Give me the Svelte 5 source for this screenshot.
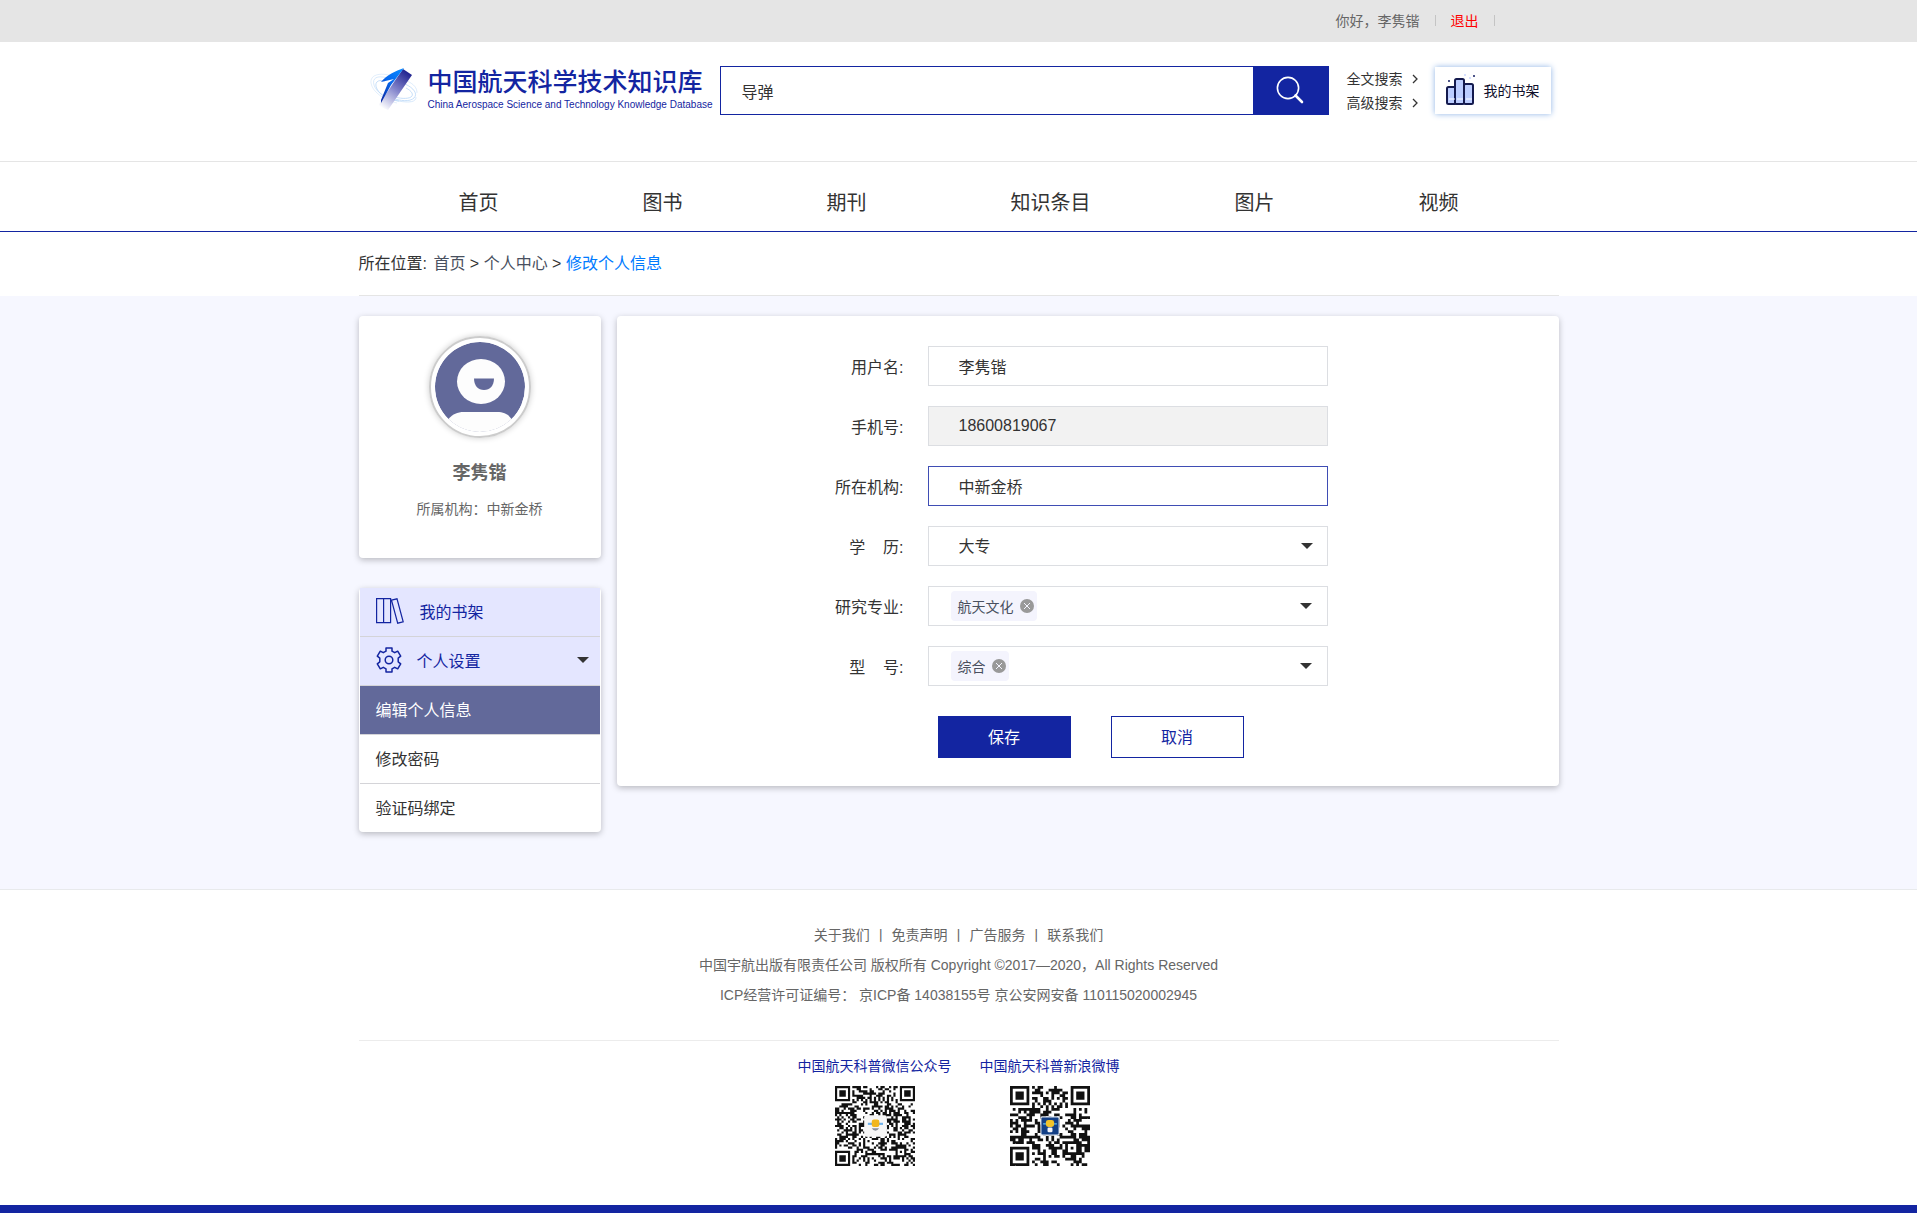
<script lang="ts">
  type Cell = { x: number; y: number };

  const navItems = ['首页', '图书', '期刊', '知识条目', '图片', '视频'];
  const aboutLinks = ['关于我们', '免责声明', '广告服务', '联系我们'];

  let keyword = '导弹';
  let username = '李隽锴';
  let phone = '18600819067';
  let org = '中新金桥';
  let degree = '大专';
  let majors = ['航天文化'];
  let models = ['综合'];
  let settingsOpen = true;

  const subItems = ['编辑个人信息', '修改密码', '验证码绑定'];
  let activeItem = '编辑个人信息';

  // 7x7 finder squares in three corners, 5x5 alignment mark, timing lines, noise elsewhere
  function qrCells(n: number, seed: number): Cell[] {
    const cells: Cell[] = [];
    const finder = (x: number, y: number) => {
      const d = Math.max(Math.abs(x - 3), Math.abs(y - 3));
      return d > 4 ? null : d === 3 || d <= 1;
    };
    let s = seed;
    for (let y = 0; y < n; y++) {
      for (let x = 0; x < n; x++) {
        s = (s * 1103515245 + 12345) % 2147483648;
        let on = ((s >> 12) & 255) < 132;
        const marks = [finder(x, y), finder(n - 1 - x, y), finder(x, n - 1 - y)];
        const mark = marks.find((m) => m !== null);
        const a = Math.max(Math.abs(x - (n - 7)), Math.abs(y - (n - 7)));
        if (mark !== undefined) on = mark as boolean;
        else if (a <= 2) on = a !== 1;
        else if (x === 6 || y === 6) on = (x + y) % 2 === 0;
        if (on) cells.push({ x, y });
      }
    }
    return cells;
  }

  function qrPath(n: number, seed: number): string {
    return qrCells(n, seed).map((c) => `M${c.x} ${c.y}h1v1h-1z`).join('');
  }

  const wechatQr = qrPath(37, 4271);
  const weiboQr = qrPath(29, 9157);

  function removeMajor(tag: string) {
    majors = majors.filter((t) => t !== tag);
  }

  function removeModel(tag: string) {
    models = models.filter((t) => t !== tag);
  }
</script>

<div class="topbar">
  <div class="container topbar-inner">
    <span>你好，李隽锴</span>
    <i class="sep"></i>
    <a class="logout" href="#logout">退出</a>
    <i class="sep"></i>
  </div>
</div>

<header class="header">
  <div class="container header-inner">
    <a class="logo" href="#home">
      <svg class="logo-mark" viewBox="0 0 50 46" aria-hidden="true">
        <defs>
          <linearGradient id="beam" x1="0.8" y1="0" x2="0.2" y2="1">
            <stop offset="0" stop-color="#1b1e8c" />
            <stop offset="0.5" stop-color="#8486cc" />
            <stop offset="1" stop-color="#ffffff" />
          </linearGradient>
          <linearGradient id="wing" x1="0.9" y1="0" x2="0.2" y2="1">
            <stop offset="0" stop-color="#0a8bff" />
            <stop offset="0.5" stop-color="#0668ee" />
            <stop offset="1" stop-color="#0c2ea8" />
          </linearGradient>
        </defs>
        <g fill="none" stroke="#b9d7f8" stroke-width="0.8">
          <path d="M24 10C10 6 1 9 2 17s12 17 26 20" opacity="0.5" />
          <path d="M18 12C8 9 3 12 5 19s12 14 24 16 18 1 18-4" opacity="0.7" />
          <path d="M16 15c-8-2-11 2-8 8s12 11 22 12" />
          <path d="M36 18c9 4 13 10 9 14s-14 3-22 0" />
          <path d="M37 22c6 3 8 7 5 9s-12 2-18-1" />
          <path d="M38 15c7 3 10 7 10 12" opacity="0.6" />
        </g>
        <path d="M34 3 43 9 19 44 9 40 25 16z" fill="url(#beam)" />
        <path d="M35 2 22 19 12 37 12 34 19 17 25 13 12 16C18 9 26 5 35 2z" fill="url(#wing)" />
      </svg>
      <span class="logo-text">
        <strong>中国航天科学技术知识库</strong>
        <small>China Aerospace Science and Technology Knowledge Database</small>
      </span>
    </a>

    <form class="search" on:submit|preventDefault>
      <input type="text" aria-label="搜索" bind:value={keyword} />
      <button type="submit" aria-label="搜索">
        <svg viewBox="0 0 28 28" width="28" height="28" fill="none" stroke="#fff">
          <circle cx="12" cy="12" r="10.6" stroke-width="1.6" />
          <path d="M19.5 19.5 26 26" stroke-width="2.6" stroke-linecap="round" />
        </svg>
      </button>
    </form>

    <div class="search-links">
      {#each ['全文搜索', '高级搜索'] as label}
        <a href="#search">
          {label}
          <svg viewBox="0 0 6 10" width="6" height="10" fill="none" stroke="#333" stroke-width="1.3">
            <path d="M1 1 5 5 1 9" />
          </svg>
        </a>
      {/each}
    </div>

    <a class="shelf" href="#shelf">
      <svg viewBox="0 0 30 32" width="30" height="32" aria-hidden="true">
        <g fill="#bccdff" stroke="#141a4e" stroke-width="2">
          <rect x="1" y="13" width="9" height="17" rx="1.5" />
          <rect x="18" y="10" width="9" height="20" rx="1.5" />
          <rect x="9" y="5" width="9" height="25" rx="1.5" />
        </g>
        <path d="M3 25h6M11 25h6M20 25h6" stroke="#fff" stroke-width="1" />
        <path d="m2 6 2 2m0-2-2 2M27 1l2 2m0-2-2 2" stroke="#39427c" stroke-width="0.9" />
        <path d="M18 1h2M23 4h2" stroke="#c9d6ff" stroke-width="1.5" />
      </svg>
      我的书架
    </a>
  </div>
</header>

<nav class="nav">
  <div class="container nav-inner">
    {#each navItems as item}
      <a href="#nav">{item}</a>
    {/each}
  </div>
</nav>

<div class="container crumbs">
  <span>所在位置:</span> <a href="#home">首页</a> &gt; <a href="#center">个人中心</a> &gt; <a class="current" href="#edit">修改个人信息</a>
</div>

<main class="main">
  <div class="container columns">
    <aside class="sidebar">
      <section class="profile">
        <div class="avatar">
          <svg viewBox="0 0 90 90" aria-hidden="true">
            <circle cx="45" cy="45" r="45" fill="#62699a" />
            <ellipse cx="46" cy="39.5" rx="24" ry="22.5" fill="#fdfdfd" />
            <path d="M39 36.5h20c0 7-4 11.5-10 11.5s-10-4.5-10-11.5z" fill="#62699a" />
            <path d="M13.500 77C18 72 22 70 29 70h33c7 0 11 2 14.500 7L78 92H12z" fill="#fdfdfd" />
          </svg>
        </div>
        <h2>李隽锴</h2>
        <p>所属机构：中新金桥</p>
      </section>

      <nav class="menu">
        <a class="group" href="#shelf">
          <svg class="books" viewBox="0 0 28 26" fill="none" stroke="#1325a1" stroke-width="1.2">
            <path d="M.6.6h14v24H.6zM7.6.6v24M15.5 2.2 21 .8l6.200 23-5.500 1.400z" />
          </svg>
          我的书架
        </a>
        <button type="button" class="group" on:click={() => (settingsOpen = !settingsOpen)}>
          <svg class="gear" viewBox="0 0 26 26" fill="none" stroke="#1325a1" stroke-width="1.5" stroke-linejoin="round">
            <path d="M10 1h6v3.200l2.700 1.500 3-1.500 3 5-2.500 2v3.600l2.500 2-3 5-3-1.500-2.700 1.500V25h-6v-3.200l-2.700-1.500-3 1.500-3-5 2.500-2v-3.600l-2.500-2 3-5 3 1.500L10 4.200z" />
            <circle cx="13" cy="13" r="3.800" />
          </svg>
          个人设置
          <span class="caret"></span>
        </button>
        {#if settingsOpen}
          {#each subItems as item}
            <a class="item" class:active={item === activeItem} href="#settings" on:click={() => (activeItem = item)}>{item}</a>
          {/each}
        {/if}
      </nav>
    </aside>

    <form class="panel" on:submit|preventDefault>
      <div class="row">
        <label for="username">用户名:</label>
        <input id="username" class="field" type="text" bind:value={username} />
      </div>
      <div class="row">
        <label for="phone">手机号:</label>
        <input id="phone" class="field" type="text" value={phone} disabled />
      </div>
      <div class="row">
        <label for="org">所在机构:</label>
        <input id="org" class="field focused" type="text" bind:value={org} />
      </div>
      <div class="row">
        <label for="degree">学&nbsp;&nbsp;&nbsp;&nbsp;历:</label>
        <div class="select-wrap">
          <select id="degree" class="field" bind:value={degree}>
            <option>大专</option>
            <option>本科</option>
            <option>硕士</option>
            <option>博士</option>
          </select>
          <span class="caret"></span>
        </div>
      </div>
      <div class="row">
        <span class="label" id="major-label">研究专业:</span>
        <div class="field tags" role="group" aria-labelledby="major-label">
          {#each majors as tag}
            <span class="tag">
              {tag}
              <button type="button" aria-label="移除" on:click={() => removeMajor(tag)}>
                <svg viewBox="0 0 14 14"><circle cx="7" cy="7" r="7" fill="#999" /><path d="m4 4 6 6m0-6-6 6" stroke="#f4f4fd" /></svg>
              </button>
            </span>
          {/each}
          <button type="button" class="open" aria-label="展开"><span class="caret"></span></button>
        </div>
      </div>
      <div class="row">
        <span class="label" id="model-label">型&nbsp;&nbsp;&nbsp;&nbsp;号:</span>
        <div class="field tags" role="group" aria-labelledby="model-label">
          {#each models as tag}
            <span class="tag">
              {tag}
              <button type="button" aria-label="移除" on:click={() => removeModel(tag)}>
                <svg viewBox="0 0 14 14"><circle cx="7" cy="7" r="7" fill="#999" /><path d="m4 4 6 6m0-6-6 6" stroke="#f4f4fd" /></svg>
              </button>
            </span>
          {/each}
          <button type="button" class="open" aria-label="展开"><span class="caret"></span></button>
        </div>
      </div>
      <div class="actions">
        <button type="submit" class="btn primary">保存</button>
        <button type="button" class="btn">取消</button>
      </div>
    </form>
  </div>
</main>

<footer class="footer">
  <div class="container about">
    <p>
      {#each aboutLinks as link, i}
        {#if i > 0}{' 丨 '}{/if}<a href="#about">{link}</a>
      {/each}
    </p>
    <p>中国宇航出版有限责任公司 版权所有 Copyright ©2017—2020，All Rights Reserved</p>
    <p>ICP经营许可证编号： 京ICP备 14038155号 京公安网安备 110115020002945</p>
  </div>
  <div class="container codes">
    <figure>
      <figcaption>中国航天科普微信公众号</figcaption>
      <svg viewBox="0 0 37 37" role="img" aria-label="微信二维码">
        <path d={wechatQr} fill="#111" />
        <rect x="13.5" y="13.5" width="10.5" height="10" rx="1" fill="#f6f6f6" />
        <path d="M15.2 17h7v1h-7z" fill="#6fb1ea" />
        <rect x="17" y="15.5" width="3.5" height="3.5" rx="1" fill="#f2b61c" />
        <path d="M17 19.500q1.700 2.500 3.400 0z" fill="#8a8f9a" />
      </svg>
    </figure>
    <figure>
      <figcaption>中国航天科普新浪微博</figcaption>
      <svg viewBox="0 0 29 29" role="img" aria-label="微博二维码">
        <path d={weiboQr} fill="#111" />
        <rect x="11" y="11" width="7" height="7" rx="0.6" fill="#dfe6ef" />
        <rect x="11.4" y="11.4" width="6.2" height="6.2" rx="0.4" fill="#123f86" />
        <rect x="13" y="12.3" width="3" height="2.6" rx="0.9" fill="#f2c32a" />
        <path d="M12 13.500h1v.5h-1zM16 13.500h1v.5h-1z" fill="#5fc0f0" />
        <rect x="13.6" y="15" width="1.8" height="1.8" rx="0.5" fill="#f2f4fa" />
      </svg>
    </figure>
  </div>
</footer>

<style>
  :global(body) {
    background: #fff;
    color: #333;
    font-family: 'Liberation Sans', 'Noto Sans CJK SC', sans-serif;
    font-size: 16px;
  }

  a {
    color: inherit;
    text-decoration: none;
  }

  input,
  select,
  button {
    box-sizing: border-box;
    margin: 0;
    padding: 0;
    border: 0;
    background: none;
    color: inherit;
    font: inherit;
    outline: none;
  }

  button {
    cursor: pointer;
  }

  h2,
  p,
  figure {
    margin: 0;
  }

  .container {
    box-sizing: border-box;
    max-width: 1200px;
    margin: 0 auto;
  }

  .topbar {
    background: #e5e5e5;
    color: #666;
    font-size: 14px;
  }

  .topbar-inner {
    display: flex;
    align-items: center;
    justify-content: flex-end;
    gap: 15px;
    box-sizing: border-box;
    height: 42px;
    padding: 0 64px 2px 0;
  }

  .sep {
    width: 1px;
    height: 11px;
    background: #c4c4c4;
  }

  .logout {
    color: #f00;
  }

  .header {
    border-bottom: 1px solid #e5e5e5;
  }

  .header-inner {
    display: flex;
    align-items: flex-start;
    height: 119px;
    padding: 24px 8px 0 10px;
  }

  .logo {
    display: flex;
    flex: none;
    width: 351px;
    color: #1325a1;
  }

  .logo-mark {
    width: 50px;
    height: 46px;
  }

  .logo-text {
    display: flex;
    flex-direction: column;
    margin-left: 9px;
    white-space: nowrap;
  }

  .logo-text strong {
    font-size: 25px;
    font-weight: 500;
    line-height: 32px;
  }

  .logo-text small {
    font-size: 10px;
    line-height: 14px;
  }

  .search {
    display: flex;
    flex: 1;
    box-sizing: border-box;
    height: 49px;
    border: 1px solid #1325a1;
  }

  .search input {
    flex: 1;
    min-width: 0;
    padding: 0 21px;
  }

  .search button {
    display: flex;
    align-items: center;
    justify-content: center;
    width: 75px;
    padding-bottom: 2px;
    background: #1325a1;
  }

  .search-links {
    display: flex;
    flex-direction: column;
    margin: 1px 0 0 18px;
    font-size: 14px;
    line-height: 24px;
  }

  .search-links a {
    display: flex;
    align-items: center;
    gap: 9px;
  }

  .shelf {
    display: flex;
    align-items: center;
    gap: 8px;
    box-sizing: border-box;
    width: 116px;
    height: 47px;
    margin: 1px 0 0 17px;
    padding: 0 0 2px 11px;
    box-shadow: 0 0 6px #8fb4e6;
    color: #10102c;
    font-size: 14px;
  }

  .nav {
    border-bottom: 1px solid #1325a1;
  }

  .nav-inner {
    display: flex;
    align-items: center;
    justify-content: center;
    gap: 144px;
    box-sizing: border-box;
    height: 69px;
    padding-top: 10px;
    font-size: 20px;
  }

  .crumbs {
    height: 64px;
    border-bottom: 1px solid #e5e5e5;
    line-height: 63px;
  }

  .crumbs span {
    margin-right: 2px;
  }

  .crumbs a {
    color: #495060;
  }

  .crumbs .current {
    color: #007bff;
  }

  .main {
    padding: 20px 0 57px;
    background: #f6f7ff;
  }

  .columns {
    display: flex;
    align-items: flex-start;
    gap: 16px;
  }

  .sidebar {
    flex: none;
    width: 242px;
  }

  .profile,
  .menu,
  .panel {
    border-radius: 4px;
    background: #fff;
    box-shadow: 0 2px 6px rgba(0, 0, 0, 0.25);
  }

  .profile {
    display: flex;
    flex-direction: column;
    align-items: center;
    box-sizing: border-box;
    height: 242px;
    padding-top: 20px;
    color: #666;
  }

  .avatar {
    box-sizing: border-box;
    width: 102px;
    height: 102px;
    padding: 4px;
    border: 2px solid #ccc;
    border-radius: 50%;
    box-shadow: 0 0 6px rgba(0, 0, 0, 0.2);
  }

  .avatar svg {
    display: block;
    width: 90px;
    height: 90px;
    border-radius: 50%;
  }

  .profile h2 {
    margin-top: 20px;
    font-size: 18px;
    font-weight: 700;
    line-height: 30px;
  }

  .profile p {
    margin-top: 8px;
    font-size: 14px;
    line-height: 26px;
  }

  .menu {
    margin-top: 30px;
    padding: 0 1px;
  }

  .group,
  .item {
    display: flex;
    align-items: center;
    box-sizing: border-box;
    width: 100%;
    height: 49px;
    padding: 0 11px 2px 16px;
    border-bottom: 1px solid #d4d4d8;
    text-align: left;
  }

  .item:last-child {
    height: 48px;
    border-bottom: 0;
  }

  .group {
    background: #e4e6ff;
    color: #1325a1;
  }

  .group .caret {
    margin-left: auto;
  }

  .books {
    width: 28px;
    height: 26px;
    margin-right: 16px;
  }

  .gear {
    width: 26px;
    height: 26px;
    margin-right: 15px;
  }

  .active {
    background: #62699a;
    color: #fff;
  }

  .caret {
    width: 0;
    height: 0;
    border: 6px solid transparent;
    border-top-color: #333;
    border-bottom: 0;
  }

  .panel {
    flex: 1;
    padding: 30px 0 28px;
  }

  .row {
    display: flex;
    align-items: center;
    gap: 24px;
    margin-bottom: 20px;
  }

  .row label,
  .row .label {
    width: 287px;
    text-align: right;
  }

  .field {
    box-sizing: border-box;
    width: 400px;
    height: 40px;
    padding: 0 30px;
    border: 1px solid #dcdee2;
    background: #fff;
  }

  .field:disabled {
    background: #f2f2f2;
    color: #333;
    opacity: 1;
  }

  .field.focused {
    border-color: #3f4db4;
  }

  .select-wrap {
    position: relative;
  }

  .select-wrap select {
    appearance: none;
  }

  .select-wrap .caret {
    position: absolute;
    top: 17px;
    right: 15px;
    pointer-events: none;
  }

  .tags {
    display: flex;
    align-items: center;
    gap: 8px;
    padding: 0 15px 0 22px;
  }

  .tag {
    display: flex;
    align-items: center;
    gap: 6px;
    height: 30px;
    padding: 0 3px 0 7px;
    border-radius: 4px;
    background: #f4f4fd;
    color: #495060;
    font-size: 14px;
  }

  .tag svg {
    display: block;
    width: 14px;
    height: 14px;
  }

  .open {
    margin-left: auto;
  }

  .open .caret {
    display: block;
  }

  .actions {
    display: flex;
    gap: 40px;
    margin: 30px 0 0 321px;
  }

  .btn {
    width: 133px;
    height: 42px;
    padding-bottom: 2px;
    border: 1px solid #1325a1;
    color: #1325a1;
  }

  .btn.primary {
    background: #1325a1;
    color: #fff;
  }

  .footer {
    border-top: 1px solid #e8eaec;
    border-bottom: 8px solid #1325a1;
  }

  .about {
    padding: 30px 0;
    border-bottom: 1px solid #ececec;
    color: #666;
    font-size: 14px;
    line-height: 30px;
    text-align: center;
  }

  .codes {
    display: flex;
    justify-content: center;
    gap: 28px;
    padding: 10px 0 39px;
    color: #1325a1;
    font-size: 14px;
    line-height: 30px;
  }

  .codes figure {
    display: flex;
    flex-direction: column;
    align-items: center;
    gap: 5px;
  }

  .codes svg {
    width: 80px;
    height: 80px;
  }
</style>
